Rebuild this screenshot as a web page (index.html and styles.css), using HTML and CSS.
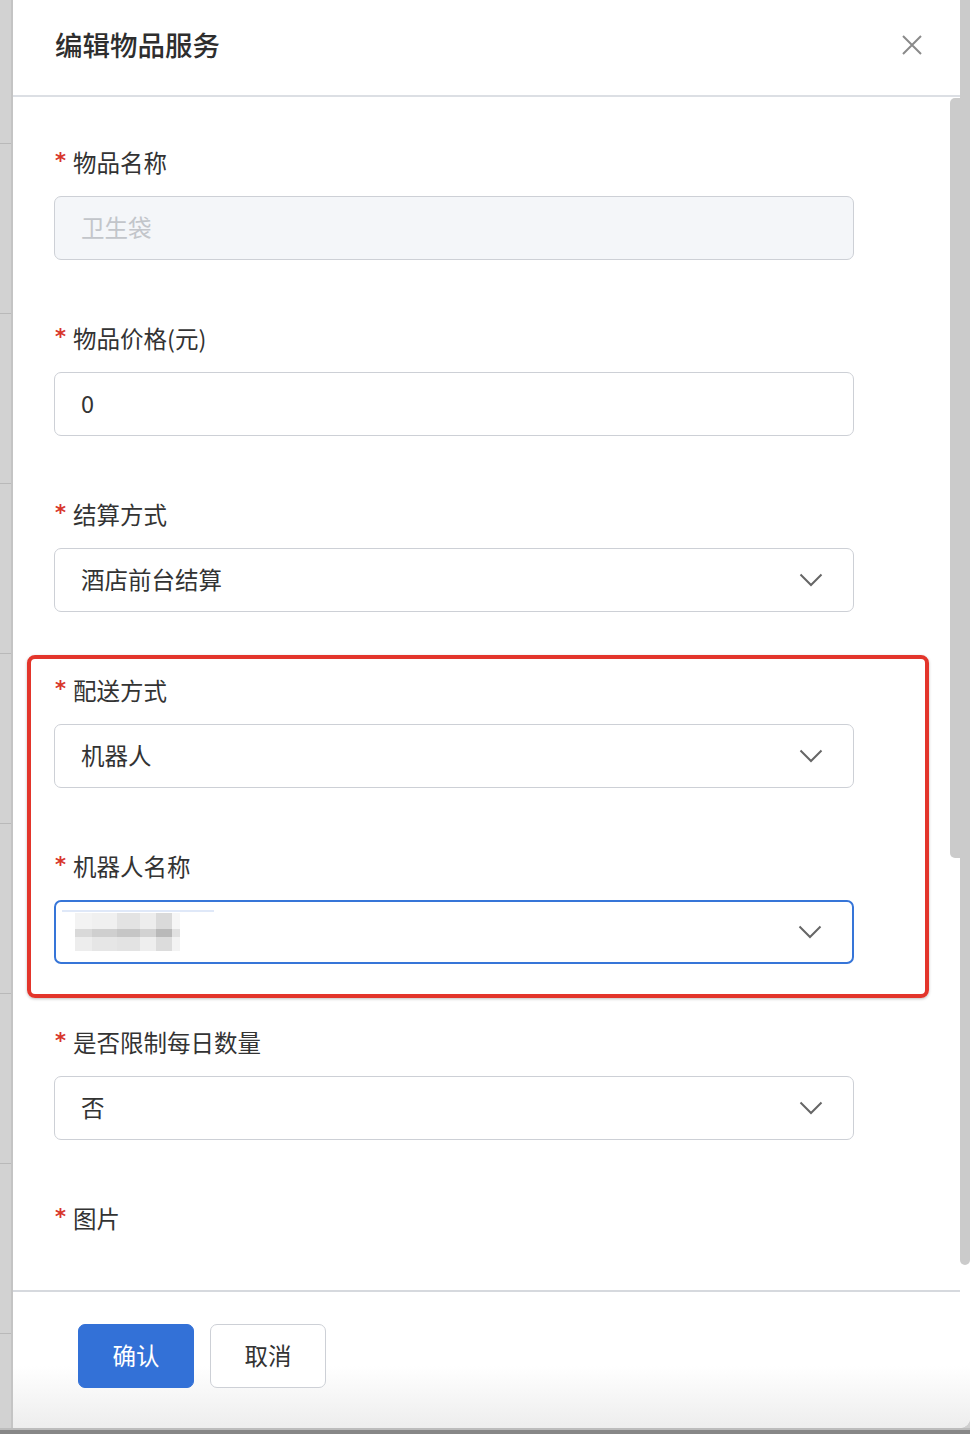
FILE: index.html
```html
<!DOCTYPE html>
<html lang="zh-CN">
<head>
<meta charset="utf-8">
<title>编辑物品服务</title>
<link rel="stylesheet" href="styles.css">
</head>
<body>
<div class="page">
  <div class="row">
    <div class="strip"></div>
    <div class="modal">
      <div class="header">
        <h1 class="title">编辑物品服务</h1>
        <svg class="close" width="20" height="20" viewBox="0 0 20 20"><path d="M1 1L19 19M19 1L1 19" stroke="#8a8a8a" stroke-width="2" fill="none"/></svg>
      </div>
      <div class="body">
        <div class="item">
          <div class="label"><span class="req">*</span>物品名称</div>
          <div class="field disabled">卫生袋</div>
        </div>
        <div class="item">
          <div class="label"><span class="req">*</span>物品价格(元)</div>
          <div class="field">0</div>
        </div>
        <div class="item">
          <div class="label"><span class="req">*</span>结算方式</div>
          <div class="field select"><span>酒店前台结算</span><svg class="chev" width="24" height="14" viewBox="0 0 24 14"><polyline points="1.5,1.5 12,12 22.5,1.5" fill="none" stroke="#666" stroke-width="2"/></svg></div>
        </div>
        <div class="item">
          <div class="label"><span class="req">*</span>配送方式</div>
          <div class="field select"><span>机器人</span><svg class="chev" width="24" height="14" viewBox="0 0 24 14"><polyline points="1.5,1.5 12,12 22.5,1.5" fill="none" stroke="#666" stroke-width="2"/></svg></div>
        </div>
        <div class="item">
          <div class="label"><span class="req">*</span>机器人名称</div>
          <div class="field select focus">
            <div class="mosaic">
              <i class="c1"></i><i class="c2"></i><i class="c3"></i><i class="c4"></i><i class="c5"></i><i class="c6"></i>
              <i class="d1"></i><i class="d2"></i><i class="d3"></i><i class="d4"></i><i class="d5"></i><i class="d6"></i>
              <i class="e1"></i><i class="e2"></i><i class="e3"></i><i class="e4"></i><i class="e5"></i><i class="e6"></i>
            </div>
            <svg class="chev" width="24" height="14" viewBox="0 0 24 14"><polyline points="1.5,1.5 12,12 22.5,1.5" fill="none" stroke="#666" stroke-width="2"/></svg>
          </div>
        </div>
        <div class="item">
          <div class="label"><span class="req">*</span>是否限制每日数量</div>
          <div class="field select"><span>否</span><svg class="chev" width="24" height="14" viewBox="0 0 24 14"><polyline points="1.5,1.5 12,12 22.5,1.5" fill="none" stroke="#666" stroke-width="2"/></svg></div>
        </div>
        <div class="item">
          <div class="label"><span class="req">*</span>图片</div>
        </div>
      </div>
      <div class="footer">
        <button class="btn primary">确认</button>
        <button class="btn">取消</button>
      </div>
    </div>
  </div>
  <div class="bottom"></div>
  <div class="track"></div>
  <div class="thumb"></div>
  <div class="highlight"></div>
</div>
</body>
</html>
```
FILE: styles.css
```css
* { box-sizing: border-box; }
html, body { margin: 0; padding: 0; }
body {
  width: 970px;
  height: 1434px;
  overflow: hidden;
  background: #cfcfcf;
  font-family: "Noto Sans CJK SC", "Noto Sans", sans-serif;
  color: #333;
}
.page { position: relative; width: 970px; height: 1434px; }
.row { display: flex; height: 1428px; }
.strip {
  width: 13px;
  flex: none;
  background:
    linear-gradient(to right, transparent 11px, #c4c4c4 11px) ,
    linear-gradient(to bottom, transparent 169px, #b9b9b9 169px) 0 -26px / 100% 170px repeat-y,
    #d2d2d2;
}
.modal {
  flex: 1;
  display: flex;
  flex-direction: column;
  background: #fff;
  border-bottom-right-radius: 10px;
  overflow: hidden;
}
.header {
  height: 97px;
  flex: none;
  display: flex;
  align-items: center;
  justify-content: space-between;
  padding: 0 48px 8px 42px;
  border-bottom: 2px solid #dcdfe4;
}
.title {
  margin: 0;
  font-size: 27.5px;
  font-weight: 500;
  color: #2e2e2e;
  line-height: 40px;
}
.close { display: block; margin-top: 2px; }
.body {
  height: 1193px;
  flex: none;
  overflow: hidden;
  padding: 49px 0 0 41px;
}
.item { margin-bottom: 62px; }
.label {
  height: 32px;
  line-height: 32px;
  font-size: 23.5px;
  color: #333;
  margin-bottom: 18px;
  display: flex;
  align-items: center;
}
.req {
  width: 19px;
  padding-left: 1px;
  color: #d8362b;
  font-family: "DejaVu Sans", sans-serif;
  font-size: 21px;
  font-weight: bold;
  line-height: 32px;
  position: relative;
  top: -1px;
}
.field {
  width: 800px;
  height: 64px;
  border: 1.5px solid #cdd0d6;
  border-radius: 7px;
  padding: 0 30px 3px 26px;
  font-size: 23.5px;
  color: #333;
  display: flex;
  align-items: center;
  background: #fff;
}
.field.disabled {
  background: #f4f6f9;
  color: #c2c5ca;
}
.select { justify-content: space-between; padding-bottom: 0; }
.select span { padding-bottom: 3px; }
.chev { display: block; }
.focus {
  border: 2px solid #3675d8;
  position: relative;
}
.focus::before {
  content: "";
  position: absolute;
  left: 6px;
  top: 8px;
  width: 152px;
  height: 2px;
  background: #dfe8f8;
}
.mosaic {
  margin-left: -7px;
  margin-top: 0px;
  display: grid;
  grid-template-columns: 17px 25px 23px 16px 16px 8px;
  grid-template-rows: 16px 8px 14px;
  filter: blur(0.4px);
}
.mosaic i { display: block; }
.c1 { background: #f3f3f3; } .c2 { background: #f0f0f0; } .c3 { background: #e3e3e3; }
.c4 { background: #ededed; } .c5 { background: #dadada; } .c6 { background: #f6f6f6; }
.d1 { background: #d9d9d9; } .d2 { background: #cfcfcf; } .d3 { background: #c6c6c6; }
.d4 { background: #d2d2d2; } .d5 { background: #b9b9b9; } .d6 { background: #e1e1e1; }
.e1 { background: #ededed; } .e2 { background: #e6e6e6; } .e3 { background: #e3e3e3; }
.e4 { background: #eeeeee; } .e5 { background: #dcdcdc; } .e6 { background: #f3f3f3; }
.footer {
  flex: 1;
  display: flex;
  align-items: flex-start;
  gap: 16px;
  padding: 34px 0 0 65px;
  background:
    linear-gradient(#d6d9de, #d6d9de) top left / calc(100% - 10px) 2px no-repeat,
    linear-gradient(to bottom, #ffffff 55%, #ededed 100%);
}
.btn {
  width: 116px;
  height: 64px;
  border-radius: 7px;
  border: 1.5px solid #cdd0d6;
  background: #fff;
  color: #333;
  font-family: "Noto Sans CJK SC", sans-serif;
  font-size: 23.5px;
  padding: 0 0 3px;
  cursor: pointer;
}
.btn.primary {
  background: #3371d7;
  border-color: #3371d7;
  color: #fff;
}
.bottom {
  height: 6px;
  background: linear-gradient(to bottom, #bcbcbc 0 2px, #878787 2px);
}
.track {
  position: absolute;
  left: 960px;
  top: 0;
  width: 10px;
  height: 1265px;
  background: #cbcbcb;
  border-radius: 0 0 5px 5px;
}
.thumb {
  position: absolute;
  left: 950px;
  top: 98px;
  width: 20px;
  height: 760px;
  background: #cbcbcb;
  border-radius: 5px 0 0 5px;
}
.highlight {
  position: absolute;
  left: 27px;
  top: 655px;
  width: 902px;
  height: 343px;
  border: 4px solid #e3352b;
  border-radius: 8px;
  box-shadow: 0 1px 3px rgba(0,0,0,0.25);
}
```
